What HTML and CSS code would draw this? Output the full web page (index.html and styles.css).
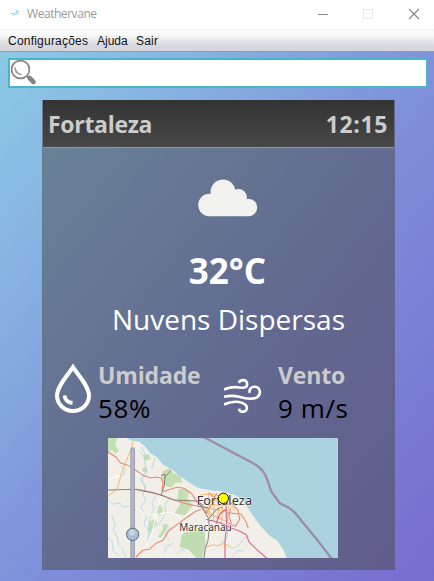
FILE: index.html
```html
<!DOCTYPE html>
<html lang="pt-BR">
<head>
<meta charset="utf-8">
<title>Weathervane</title>
<link rel="stylesheet" href="styles.css">
</head>
<body>
<header class="titlebar">
  <svg class="app-icon" width="10" height="8" viewBox="0 0 10 8"><path d="M.5 3.500h4l1.500-2h3M2 6l2-1.500 2 .2 1-1.500 2 .1M6.500 0v3" fill="none" stroke="#9adcf7" stroke-width="1"/></svg>
  <span class="app-name">Weathervane</span>
  <svg class="controls" width="102" height="12" viewBox="0 0 102 12" fill="none">
    <path d="M0 6.500h10" stroke="#8d8d8d"/>
    <rect x="45.500" y="1.500" width="9" height="9" stroke="#e8e8e8"/>
    <path d="M91 1l10 10M101 1L91 11" stroke="#858585" stroke-width="1.100"/>
  </svg>
</header>
<nav class="menu"><span class="m1">Configurações</span><span class="m2">Ajuda</span><span class="m3">Sair</span></nav>
<main class="content">
  <div class="search">
    <svg width="26" height="26" viewBox="0 0 26 26" fill="none" stroke="#858585">
      <circle cx="9.500" cy="9.500" r="8.900" stroke-width="1.700"/>
      <path d="M4 7c-.5 5 2.500 8 7 7.500-3.500-.8-6-3-7-7.500z" fill="#858585" stroke-width=".5"/>
      <path d="M15.700 16l2.800 2" stroke-width="2"/>
      <path d="M18.500 18l4 4" stroke-width="4.600" stroke-linecap="round"/>
    </svg>
  </div>
  <section class="card">
    <div class="card-head"><span class="city">Fortaleza</span><span class="time">12:15</span></div>
    <svg class="cloud" width="60" height="38" viewBox="0 0 60 38" fill="#f1f1f0">
      <circle cx="11.500" cy="26" r="11.300"/><circle cx="25" cy="13" r="12.500"/><circle cx="40.500" cy="18.500" r="8.500"/><circle cx="50.500" cy="28.500" r="8.700"/><path d="M11.500 37.200h39V24L38 12H20l-8 8z"/>
    </svg>
    <div class="temp">32°C</div>
    <div class="desc">Nuvens Dispersas</div>
    <div class="stats">
      <svg class="drop" width="38" height="50" viewBox="0 0 38 50" fill="none" stroke="#fff">
        <path d="M19 4.200C14 12 3 23 3 32.500a16 15.500 0 0 0 32 0C35 23 24 12 19 4.200z" stroke-width="4"/>
        <path d="M10.500 32.500c.5 4.500 3.500 7 8 7.500" stroke-width="3.800"/>
      </svg>
      <div class="stat humidity"><b>Umidade</b><span>58%</span></div>
      <svg class="wind" width="38" height="36" viewBox="0 0 38 36" fill="none" stroke="#fff" stroke-width="2.600">
        <path d="M0 11.500C6 9 9 8.500 15 9.500c6 1 9-.5 8-4.500-1-3.500-6-4-8.300-.3"/>
        <path d="M0 18.800c6-1.500 9-1.500 15 0 6 1.700 13 3.300 18 .5 4.500-3 3.500-10-2-10.500-4-.3-6.500 3-5 6"/>
        <path d="M0 26.500c6-3 10-3.300 15-2.500 6 1 9 4 7.500 7.500-1.500 3.200-6.800 3-7.500-.8"/>
      </svg>
      <div class="stat wind-data"><b>Vento</b><span class="speed">9 m/s</span></div>
    </div>
    <svg class="map" width="230" height="120" viewBox="24 18 690 360" fill="none">
      <path fill="#f2efe9" d="M24 18h690v360H24z"/>
      <path fill="#aad3df" d="M80 18l16 8 20 2 20 16 15 20 20 12 18 22 26 14 20 17 30 20 28 18 38 8 38 3 33 10 24 12 18 28 20 30 20 27 26 27 22 14 20 30L559 378H714V18z"/>
      <g fill="#c4dfb2">
        <path d="M24 18h28l-6 20 10 18-10 10-10-12-12 10z"/>
        <path d="M188 118l20-10 12 16 22 8 5 20-20 0-12 14-24-4-6-20z"/>
        <path d="M235 172l20-4 14 12-8 18 18 22-24 30-32-6 18-28-8-18z"/>
        <path d="M170 222l12-4 8 16-10 18-10-6zM148 268l16-6 8 12-18 20-9 8zM190 275l16 4-10 22-14 18-9-5 14-20z"/>
        <path fill="#bfdcb0" d="M255 300l58-6 4 46-10 38h-18l-22-24-28-10 6-34z"/>
        <path d="M128 70l18-4 6 14-16 8zM128 108l12-4 2 16-14 4z"/>
      </g>
      <g stroke="#a6d3e1" stroke-width="2.200">
        <path d="M124 44l12 26-3 20 8 32-16 24 10 20-6 20 8 18-15 22 18 28-8 20 15 25-4 35M137 120l-16 22 16 20-5 20M24 205l16 12 18-5 12 14 16-4 22 14M34 250l12 28-6 18 12 18 4 30M58 100l18 14-8 20 16 8M168 190l-12 22 6 18-14 30-3 30 10 12M210 195l-16 25 4 22-20 34-22 15-10 25M210 285l-10 28 8 12M230 370l14-18 10 6M385 290l-5 30-18 14M395 350l20-8 18-25 15-4M395 375l18-20 16 2M24 318l12 8 3 30 18 15M64 345l10 20 4 13M115 55l24 26M165 78l-10 32M218 334l-20 10-4 20"/>
      </g>
      <g stroke="#fff" stroke-width="3"><path d="M24 142l30-10 35 8 45-20M110 230l35 20 70-10 38 28M138 347l20-50 12-60 14-48"/></g>
      <g stroke="#f5ba68" stroke-width="3">
        <path d="M99 28l-5 22-20 48-12 34-10 38-28 23M300 190l30-5 35 8 25 24 15 20M320 205l65 0M322 217l60 4M315 228l68 10M326 188l2 70M342 192l-2 75M357 190l-5 82M370 200l-6 75M385 218l-3 55M312 240l55 20M302 218l25 20 22 18 35 14M320 345l20-7 12 4 20-8 22 12"/>
      </g>
      <g stroke="#e88974" stroke-width="3.200">
        <path d="M24 60l24 15 14 18 25 8 20 13 22 16 22 8 18-3 14 3 6 14-3 22 5 4 20-6 22-7 18 4 22 14 14 20 14 18M107 171l50 10 32 10 34 14 42 12 38 7 20 20M108 375l20-20 20-3 20-18 22-10 13-25 42-32 38-26 30-15M325 182l25 20 18 12M350 184l-18 38-12 18M390 210l24 25 5 25-12 23-12-5-8-25 5-25M378 242l45 4 14 22 8 20"/>
      </g>
      <g stroke="#dc6b8c" stroke-width="3.500">
        <path d="M378 222l2 55-5 50 0 51M330 264l35 10 28 14 24 8 22 12 8 22 26 25 30 26M380 230l-20 15-12 30"/>
      </g>
      <g stroke="#8b8079" stroke-width="3">
        <path d="M24 174l80-2 50 10 32 8 36 14 65 3 24 12M183 190l10-30 2-25 18-20M183 130l12-4 0 10M298 212l15 26 13 22 2 30-4 35-8 25-4 28M292 222l32 5M366 225l-18 8-8 12-14 15M318 262l18 5"/>
      </g>
      <path d="M300 10l45 23 120 64c20 12 33 30 40 55l8 25 20 28q5 10 12 12c30 10 45 30 60 50l45 55 48 62" stroke="#9c8caa" stroke-width="7"/>
      <g class="map-labels" fill="#333" stroke="#fff" stroke-opacity=".8" stroke-width="3" paint-order="stroke">
        <text x="290" y="220" font-size="38" textLength="166">Fortaleza</text>
        <text x="238" y="297" font-size="30" textLength="157" lengthAdjust="spacingAndGlyphs">Maracanaú</text>
      </g>
      <path d="M98 53v325" stroke="#9da2b0" stroke-width="14" stroke-linecap="round"/>
      <path d="M98 53v325" stroke="#b1b6c2" stroke-width="8" stroke-linecap="round"/>
      <circle cx="98" cy="307" r="18.500" fill="#a9bdd2" stroke="#5b6b7e" stroke-width="3"/>
      <circle cx="96" cy="302" r="9" fill="#c6d4e2"/>
      <circle cx="370" cy="199" r="15.500" fill="#ff0" stroke="#111" stroke-width="3"/>
    </svg>
  </section>
</main>
</body>
</html>
```
FILE: styles.css
```css
* { box-sizing: border-box; }
body {
  margin: 0;
  width: 434px;
  height: 581px;
  overflow: hidden;
  display: flex;
  flex-direction: column;
  font-family: "Open Sans", "Noto Sans", sans-serif;
}
svg { display: block; flex: none; }
span, b { white-space: nowrap; }
.titlebar {
  height: 29px;
  flex: none;
  display: flex;
  align-items: center;
  padding: 0 14px 2px 10px;
  background: #fff;
}
.app-name {
  margin-left: 7px;
  font-size: 12px;
  letter-spacing: -.45px;
  color: #999;
}
.controls { margin-left: auto; }
.menu {
  height: 23px;
  flex: none;
  display: flex;
  align-items: center;
  gap: 8px;
  padding: 1px 8px 0;
  border-bottom: 1px solid #9698a2;
  background: linear-gradient(#f5f5f5, #fcfcfc 20%, #f0f0f1 40%, #d8d9df 75%, #d5d6dd);
  font: 12px "Liberation Sans", sans-serif;
  color: #111;
}
.m1 { width: 81px; letter-spacing: .22px; }
.m2 { width: 31px; }
.m3 { letter-spacing: .2px; }
.content {
  flex: 1;
  padding: 6px 6px 0 8px;
  background: linear-gradient(155deg, #8ccae6, #86b0e1 25%, #7e8dd9 62%, #776dd0);
}
.search {
  width: 420px;
  height: 30px;
  border: 2px solid #4ab5c6;
  background: #fff;
  padding-left: 1px;
}
.card {
  width: 353px;
  height: 470px;
  margin: 12px 0 0 34px;
  background: rgba(71, 71, 71, .5);
  border: 1px solid rgba(100, 100, 130, .15);
  border-top: 0;
  display: flex;
  flex-direction: column;
  align-items: center;
}
.content { background: linear-gradient(to bottom right, #8ccae6, #86b0e1 25%, #7e8dd9 55%, #776dd0); }
.card-head {
  align-self: stretch;
  height: 48px;
  flex: none;
  display: flex;
  align-items: center;
  justify-content: space-between;
  padding: 1px 6px 0 5px;
  border-bottom: 1px solid #8397c4;
  background: linear-gradient(#333, #484848);
  color: #ccc;
  font-size: 23px;
  font-weight: 700;
}
.city { letter-spacing: -.3px; }
.time { letter-spacing: .6px; }
.cloud { margin: 31px 0 0 18px; }
.temp {
  height: 50px;
  margin: 28px 0 0 18px;
  font-size: 35px;
  line-height: 51px;
  font-weight: 700;
  color: #fff;
}
.desc {
  height: 40px;
  margin: 5px 0 0 20px;
  font-size: 28px;
  line-height: 38px;
  color: #fff;
}
.stats {
  align-self: stretch;
  display: flex;
  height: 78px;
  margin-top: 20px;
  padding-left: 11px;
}
.drop { margin-top: 3px; }
.stat { display: flex; flex-direction: column; height: 70px; }
.stat b { font-size: 23px; line-height: 30px; color: #ccc; letter-spacing: -.15px; }
.stat span { font-size: 26px; line-height: 37px; color: #000; letter-spacing: .6px; }
.humidity { width: 126px; margin-left: 6px; }
.wind { margin-top: 18px; }
.wind-data { margin-left: 16px; }
.map { margin-left: 9px; }
.map-labels { font-family: "Noto Sans", sans-serif; }
```
